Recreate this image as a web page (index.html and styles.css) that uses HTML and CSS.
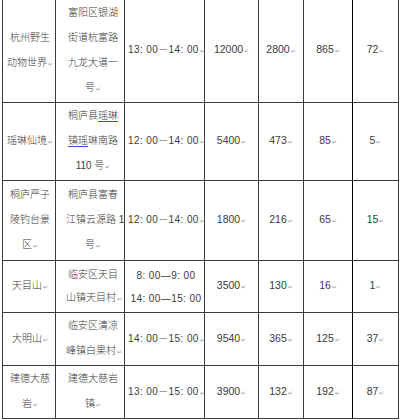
FILE: index.html
```html
<!DOCTYPE html>
<html lang="zh">
<head>
<meta charset="utf-8">
<link rel="stylesheet" href="styles.css">
</head>
<body>
<table class="grid">
  <colgroup>
    <col class="c1"><col class="c2"><col class="c3"><col class="c4"><col class="c5"><col class="c6"><col class="c7">
  </colgroup>
  <tr class="r1">
    <td class="name">杭州野生<br>动物世界<span class="pm">↵</span></td>
    <td class="addr">富阳区银湖<br>街道杭富路<br>九龙大道一<br>号<span class="pm">↵</span></td>
    <td class="time">13: 00－14: 00<span class="pm">↵</span></td>
    <td class="num">12000<span class="pm">↵</span></td>
    <td class="num">2800<span class="pm">↵</span></td>
    <td class="num sep">865<span class="pm">↵</span></td>
    <td class="num">72<span class="pm">↵</span></td>
  </tr>
  <tr class="r2">
    <td class="name">瑶琳仙境<span class="pm">↵</span></td>
    <td class="addr">桐庐县<span class="sp">瑶琳</span><br><span class="sp">镇瑶</span>琳南路<br>110 号<span class="pm">↵</span></td>
    <td class="time">12: 00－14: 00<span class="pm">↵</span></td>
    <td class="num">5400<span class="pm">↵</span></td>
    <td class="num">473<span class="pm">↵</span></td>
    <td class="num sep">85<span class="pm">↵</span></td>
    <td class="num">5<span class="pm">↵</span></td>
  </tr>
  <tr class="r3">
    <td class="name">桐庐严子<br>陵钓台景<br>区<span class="pm">↵</span></td>
    <td class="addr">桐庐县富春<br>江镇云源路 1<br>号<span class="pm">↵</span></td>
    <td class="time">12: 00－14: 00<span class="pm">↵</span></td>
    <td class="num">1800<span class="pm">↵</span></td>
    <td class="num">216<span class="pm">↵</span></td>
    <td class="num sep">65<span class="pm">↵</span></td>
    <td class="num">15<span class="pm">↵</span></td>
  </tr>
  <tr class="r4">
    <td class="name">天目山<span class="pm">↵</span></td>
    <td class="addr tight">临安区天目<br>山镇天目村<span class="pm">↵</span></td>
    <td class="time tight">8: 00—9: 00<br>14: 00—15: 00</td>
    <td class="num">3500<span class="pm">↵</span></td>
    <td class="num">130<span class="pm">↵</span></td>
    <td class="num sep">16<span class="pm">↵</span></td>
    <td class="num">1<span class="pm">↵</span></td>
  </tr>
  <tr class="r5">
    <td class="name">大明山<span class="pm">↵</span></td>
    <td class="addr">临安区清凉<br>峰镇白果村<span class="pm">↵</span></td>
    <td class="time">14: 00－15: 00<span class="pm">↵</span></td>
    <td class="num">9540<span class="pm">↵</span></td>
    <td class="num">365<span class="pm">↵</span></td>
    <td class="num sep">125<span class="pm">↵</span></td>
    <td class="num">37<span class="pm">↵</span></td>
  </tr>
  <tr class="r6">
    <td class="name">建德大慈<br>岩<span class="pm">↵</span></td>
    <td class="addr">建德大慈岩<br>镇<span class="pm">↵</span></td>
    <td class="time">13: 00－15: 00<span class="pm">↵</span></td>
    <td class="num">3900<span class="pm">↵</span></td>
    <td class="num">132<span class="pm">↵</span></td>
    <td class="num sep">192<span class="pm">↵</span></td>
    <td class="num">87<span class="pm">↵</span></td>
  </tr>
</table>
</body>
</html>
```

FILE: styles.css
```css
html, body {
  margin: 0;
  padding: 0;
  background: #ffffff;
}

.grid {
  border-collapse: collapse;
  table-layout: fixed;
  width: 397px;
  margin: -2px 0 0 2px;
  font-family: "Liberation Sans", "Noto Sans CJK SC", sans-serif;
  font-size: 10px;
  font-weight: 300;
  color: #3a3a3a;
}

.c1 { width: 53px; }
.c2 { width: 69px; }
.c3 { width: 80px; }
.c4 { width: 54px; }
.c5 { width: 45px; }
.c6 { width: 49px; }
.c7 { width: 46px; }

.grid td {
  border: 1px solid #3c3c3c;
  padding: 0;
  text-align: center;
  vertical-align: middle;
  line-height: 25px;
  white-space: nowrap;
}

.grid td.sep {
  border-right-color: #000000;
}

.r1 { height: 104px; }
.r2 { height: 78px; }
.r3 { height: 80px; }
.r4 { height: 52px; }
.r5 { height: 52px; }
.r6 { height: 52px; }

.grid td.name {
  padding: 0 2px 0 4px;
}

.grid td.addr {
  padding: 0 4px 0 10px;
}

.grid td.time {
  font-size: 10px;
  letter-spacing: 0.4px;
  padding: 0 0 0 3px;
}

.grid td.tight {
  line-height: 23px;
}

.grid td.num {
  font-size: 10.5px;
}

.pm {
  font-size: 6px;
  letter-spacing: 0;
  color: #9a9a9a;
  margin-left: 1px;
}

.sp {
  text-decoration: underline;
  text-decoration-color: #3a4fc4;
  text-underline-offset: 2px;
}
```
